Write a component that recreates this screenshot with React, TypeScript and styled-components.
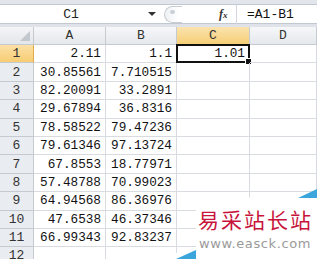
import React from 'react'
import styled, { createGlobalStyle } from 'styled-components'

const GlobalStyle = createGlobalStyle`
  html, body {
    margin: 0;
    padding: 0;
    background: #ffffff;
    overflow: hidden;
  }
  body {
    font-family: "Liberation Mono", "DejaVu Sans Mono", monospace;
  }
`

const Page = styled.div`
  position: relative;
  width: 317px;
  height: 259px;
  overflow: hidden;
  background: #dfe3e9;
`

const TopStrip = styled.div`
  height: 4px;
  background: #e2e6ec;
`

const FormulaBar = styled.div`
  display: flex;
  align-items: center;
  height: 20px;
  background: #ffffff;
  border-top: 1px solid #c2c8d0;
  border-bottom: 1px solid #c2c8d0;
  box-sizing: border-box;
`

const NameBox = styled.div`
  width: 142px;
  text-align: center;
  font-size: 13px;
  color: #222;
`

const DropArrow = styled.div`
  width: 0;
  height: 0;
  margin-left: 6px;
  border-left: 4px solid transparent;
  border-right: 4px solid transparent;
  border-top: 4px solid #333;
`

const Splitter = styled.div`
  position: relative;
  margin-left: 8px;
  width: 18px;
  height: 17px;
  border: 1px solid #c7ccd3;
  border-right: none;
  border-radius: 9px 0 0 9px;
  background: linear-gradient(90deg, #eef0f3 0%, #ffffff 80%);
  box-sizing: border-box;
  &::after {
    content: '';
    position: absolute;
    left: 5px;
    top: 3px;
    width: 5px;
    height: 4px;
    border-radius: 50%;
    background: #c9ced6;
  }
`

const FxSpace = styled.div`
  flex: 1;
`

const FxLabel = styled.div`
  font-family: "Liberation Serif", serif;
  font-style: italic;
  font-weight: bold;
  font-size: 12px;
  color: #333;
  width: 17px;
  text-align: left;
`

const FxX = styled.span`
  font-size: 9px;
`

const FieldSep = styled.div`
  width: 1px;
  height: 19px;
  background: #d3d7dd;
  margin-right: 10px;
`

const FormulaText = styled.div`
  width: 70px;
  font-size: 13px;
  color: #111;
`

const Gap = styled.div`
  height: 3px;
`

const Sheet = styled.div`
  display: grid;
  grid-template-columns: 34px 72px 71px 73px 67px;
  grid-template-rows: 18px;
  grid-auto-rows: 18.4px;
  background: #ffffff;
`

const Corner = styled.div`
  position: relative;
  background: linear-gradient(180deg, #f4f5f7 0%, #e3e6ea 100%);
  border-right: 1px solid #c5cad1;
  border-bottom: 1px solid #c5cad1;
  box-sizing: border-box;
  &::after {
    content: '';
    position: absolute;
    right: 3px;
    bottom: 3px;
    width: 0;
    height: 0;
    border-left: 10px solid transparent;
    border-bottom: 10px solid #c3c8cf;
  }
`

const ColHead = styled.div<{ $active?: boolean }>`
  display: flex;
  align-items: center;
  justify-content: center;
  font-size: 13px;
  color: #333;
  box-sizing: border-box;
  border-right: 1px solid #c5cad1;
  border-bottom: 1px solid ${p => (p.$active ? '#e3a84a' : '#c5cad1')};
  background: ${p =>
    p.$active
      ? 'linear-gradient(180deg, #fbe3ae 0%, #f6cf77 100%)'
      : 'linear-gradient(180deg, #f6f7f9 0%, #e5e8ec 100%)'};
`

const RowHead = styled.div<{ $active?: boolean }>`
  display: flex;
  align-items: center;
  justify-content: center;
  font-size: 13px;
  color: #333;
  box-sizing: border-box;
  border-right: 1px solid ${p => (p.$active ? '#e3a84a' : '#c5cad1')};
  border-bottom: 1px solid #c5cad1;
  background: ${p =>
    p.$active ? 'linear-gradient(180deg, #fbe0a6 0%, #f7cd73 100%)' : '#e9ecf0'};
`

const Cell = styled.div<{ $selected?: boolean }>`
  position: relative;
  display: flex;
  align-items: center;
  justify-content: flex-end;
  padding-right: 4px;
  font-size: 12.7px;
  color: #111;
  box-sizing: border-box;
  border-right: 1px solid #d8dbe0;
  border-bottom: 1px solid #d8dbe0;
  ${p =>
    p.$selected &&
    `
    border: 2px solid #111;
    margin: -1px 0 0 -1px;
    width: calc(100% + 1px);
    height: calc(100% + 1px);
    padding-right: 3px;
    &::after {
      content: '';
      position: absolute;
      right: -4px;
      bottom: -4px;
      width: 5px;
      height: 5px;
      background: #111;
      border: 1px solid #fff;
    }
  `}
`

const Watermark = styled.div`
  position: absolute;
  left: 176px;
  top: 189px;
  width: 141px;
  height: 70px;
`

const WatermarkBack = styled.svg`
  position: absolute;
  left: 0;
  top: 0;
`

const WatermarkText = styled.div`
  position: absolute;
  left: 22px;
  top: 18px;
  font-family: "Noto Sans CJK SC", sans-serif;
  font-size: 21px;
  line-height: 24px;
  color: #c8143c;
  letter-spacing: 2px;
  white-space: nowrap;
`

const WatermarkUrl = styled.div`
  position: absolute;
  left: 23px;
  top: 47px;
  font-family: "DejaVu Sans", sans-serif;
  font-size: 13px;
  line-height: 16px;
  color: #9a9a9a;
  letter-spacing: 0.6px;
  white-space: nowrap;
`

const columns = ['A', 'B', 'C', 'D']

const data: [string, string][] = [
  ['2.11', '1.1'],
  ['30.85561', '7.710515'],
  ['82.20091', '33.2891'],
  ['29.67894', '36.8316'],
  ['78.58522', '79.47236'],
  ['79.61346', '97.13724'],
  ['67.8553', '18.77971'],
  ['57.48788', '70.99023'],
  ['64.94568', '86.36976'],
  ['47.6538', '46.37346'],
  ['66.99343', '92.83237'],
  ['', ''],
]

const App: React.FC = () => {
  return (
    <Page>
      <GlobalStyle />
      <TopStrip />
      <FormulaBar>
        <NameBox>C1</NameBox>
        <DropArrow />
        <Splitter />
        <FxSpace />
        <FxLabel>
          f<FxX>x</FxX>
        </FxLabel>
        <FieldSep />
        <FormulaText>=A1-B1</FormulaText>
      </FormulaBar>
      <Gap />
      <Sheet>
        <Corner />
        {columns.map(c => (
          <ColHead key={c} $active={c === 'C'}>
            {c}
          </ColHead>
        ))}
        {data.map((row, i) => (
          <React.Fragment key={i}>
            <RowHead $active={i === 0}>{i + 1}</RowHead>
            <Cell>{row[0]}</Cell>
            <Cell>{row[1]}</Cell>
            <Cell $selected={i === 0}>{i === 0 ? '1.01' : ''}</Cell>
            <Cell />
          </React.Fragment>
        ))}
      </Sheet>
      <Watermark>
        <WatermarkBack width="141" height="70" viewBox="0 0 141 70">
          <polygon points="20,12 141,4 141,70 0,70 0,64 20,58" fill="#ffffff" />
          <polygon points="122,9 141,0 141,9" fill="#3aa6dc" />
          <polygon points="0,70 20,61 20,70" fill="#3aa6dc" />
        </WatermarkBack>
        <WatermarkText>易采站长站</WatermarkText>
        <WatermarkUrl>www.easck.com</WatermarkUrl>
      </Watermark>
    </Page>
  )
}

export default App
